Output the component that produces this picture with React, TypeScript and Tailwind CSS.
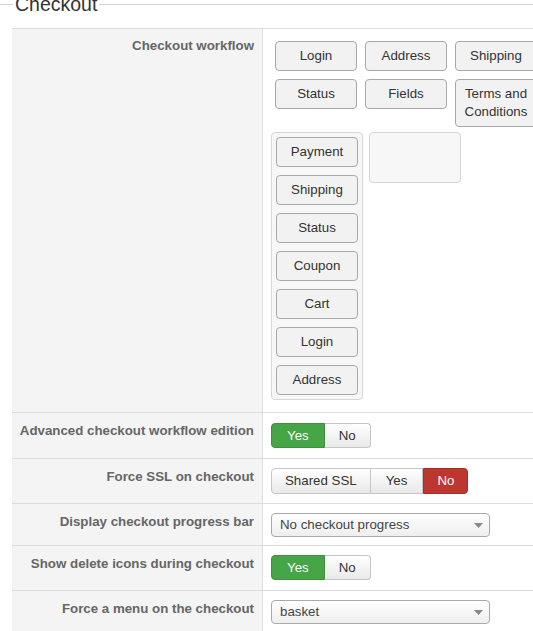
import React from "react";

const WfButton = ({ label, className = "" }: { label: React.ReactNode; className?: string }) => (
  <div
    className={
      "w-[82px] shrink-0 min-h-[30px] flex items-center justify-center text-center border border-[#a8a8a8] rounded-[4px] bg-[#f2f2f2] text-[13.3px] leading-[18px] text-[#333] py-[5px] " +
      className
    }
  >
    {label}
  </div>
);

const YesNo = () => (
  <div className="flex text-[13.3px] leading-[18px]">
    <div className="h-[25px] px-[15px] flex items-center border border-[#3f8f3f] bg-[#46a546] text-white rounded-l-[4px]">Yes</div>
    <div className="h-[25px] px-[14px] flex items-center border border-l-0 border-[#c5c5c5] bg-gradient-to-b from-white to-[#e9e9e9] text-[#333] rounded-r-[4px]">No</div>
  </div>
);

const Select = ({ value }: { value: string }) => (
  <div className="w-[219px] h-[24px] flex items-center justify-between border border-[#aaa] rounded-[4px] bg-gradient-to-b from-white to-[#eeeeee] pl-[8px] pr-[6px] text-[13.3px] text-[#444]">
    <span>{value}</span>
    <svg width="9" height="5" viewBox="0 0 9 5">
      <path d="M0 0 L9 0 L4.5 5 Z" fill="#888" />
    </svg>
  </div>
);

const Row = ({ label, children, labelPt = "pt-[9px]", cellPad = "pt-[9px] pb-[9px]" }: { label: string; children: React.ReactNode; labelPt?: string; cellPad?: string }) => (
  <div className="flex border-b border-[#ddd]">
    <div className={"w-[250px] shrink-0 bg-[#f4f4f4] text-right pr-[8px] font-bold text-[13.3px] leading-[18px] text-[#666] " + labelPt}>
      {label}
    </div>
    <div className={"flex-1 border-l border-[#ddd] pl-[8px] " + cellPad}>{children}</div>
  </div>
);

export default function App() {
  return (
    <div className="w-[533px] h-[631px] overflow-hidden bg-white font-['Liberation_Sans',Arial,sans-serif]">
      <div className="flex items-center h-[12px] -mt-[2px]">
        <div className="w-[13px] h-px bg-[#d4d4d4]" />
        <div className="px-[2px] text-[19.5px] leading-[12px] text-[#333]">Checkout</div>
        <div className="flex-1 h-px bg-[#d4d4d4]" />
      </div>
      <div className="ml-[12px] mt-[18px] border-t border-[#ddd] w-[600px]">
        <Row label="Checkout workflow" labelPt="pt-[8px]" cellPad="pt-[12px] pb-[12px]">
          <div className="flex flex-col">
            <div className="flex flex-col gap-[8px] pl-[4px]">
              <div className="flex gap-[8px] items-start">
                <WfButton label="Login" />
                <WfButton label="Address" />
                <WfButton label="Shipping" />
              </div>
              <div className="flex gap-[8px] items-start">
                <WfButton label="Status" />
                <WfButton label="Fields" />
                <WfButton label={<span>Terms and<br />Conditions</span>} />
              </div>
            </div>
            <div className="flex gap-[6px] items-start mt-[5px]">
              <div className="w-[92px] border border-[#d6d6d6] rounded-[4px] bg-[#f7f7f7] p-[4px] flex flex-col gap-[8px]">
                {["Payment", "Shipping", "Status", "Coupon", "Cart", "Login", "Address"].map((l) => (
                  <WfButton key={l} label={l} />
                ))}
              </div>
              <div className="w-[92px] h-[51px] border border-[#d6d6d6] rounded-[4px] bg-[#f7f7f7]" />
            </div>
          </div>
        </Row>
        <Row label="Advanced checkout workflow edition" labelPt="pt-[9px]" cellPad="pt-[10px] pb-[10px]">
          <YesNo />
        </Row>
        <Row label="Force SSL on checkout">
          <div className="flex text-[13.3px] leading-[18px]">
            <div className="h-[26px] px-[13px] flex items-center border border-[#c5c5c5] bg-gradient-to-b from-white to-[#e9e9e9] text-[#333] rounded-l-[4px]">Shared SSL</div>
            <div className="h-[26px] px-[15px] flex items-center border border-l-0 border-[#c5c5c5] bg-gradient-to-b from-white to-[#e9e9e9] text-[#333]">Yes</div>
            <div className="h-[26px] px-[13px] flex items-center border border-[#a52f29] bg-[#bd362f] text-white rounded-r-[4px]">No</div>
          </div>
        </Row>
        <Row label="Display checkout progress bar" cellPad="pt-[9px] pb-[8px]">
          <Select value="No checkout progress" />
        </Row>
        <Row label="Show delete icons during checkout" cellPad="pt-[9px] pb-[10px]">
          <YesNo />
        </Row>
        <Row label="Force a menu on the checkout" cellPad="pt-[9px] pb-[12px]">
          <Select value="basket" />
        </Row>
      </div>
    </div>
  );
}
